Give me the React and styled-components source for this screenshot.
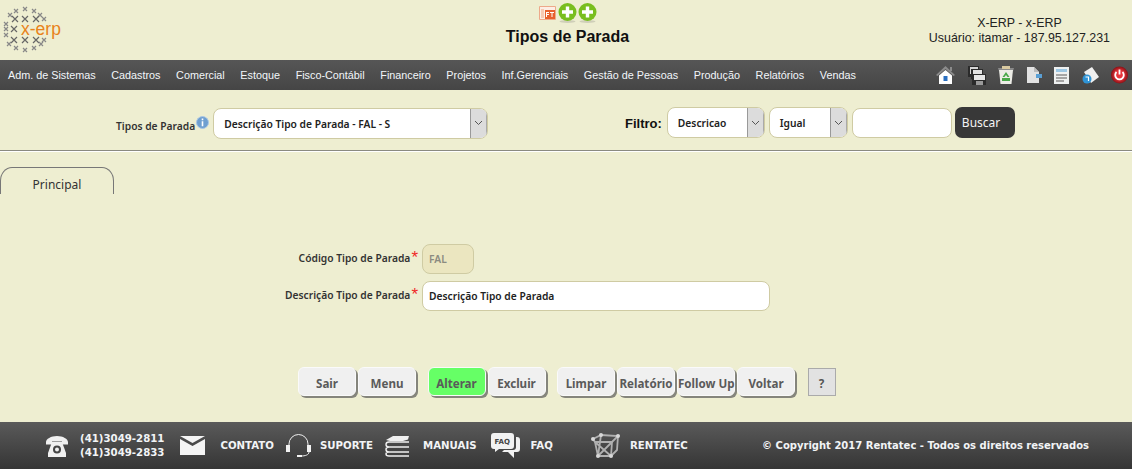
import React from "react";
import styled, { createGlobalStyle } from "styled-components";

const GlobalStyle = createGlobalStyle`
  html, body {
    margin: 0;
    padding: 0;
    background: #eeeed1;
    font-family: "Liberation Sans", Arial, sans-serif;
  }
`;

const Page = styled.div`
  width: 1132px;
  height: 469px;
  display: flex;
  flex-direction: column;
  overflow: hidden;
  background: #eeeed1;
`;

const Header = styled.header`
  height: 60px;
  display: grid;
  grid-template-columns: 1fr auto 1fr;
  align-items: start;
`;

const LogoBox = styled.div`
  padding: 5px 0 0 1px;
`;

const Center = styled.div`
  display: flex;
  flex-direction: column;
  align-items: center;
  padding: 3px 0 0 3px;
`;

const ActionIcons = styled.div`
  display: flex;
  align-items: center;
  gap: 1px;
  height: 20px;
`;

const Title = styled.h1`
  margin: 4px 0 0;
  font-size: 16px;
  line-height: 20px;
  font-weight: 700;
  color: #111;
`;

const UserBox = styled.div`
  justify-self: end;
  padding: 16px 22px 0 0;
  text-align: center;
  font-size: 12.4px;
  line-height: 15px;
  color: #222;
`;

const Nav = styled.nav`
  height: 30px;
  display: flex;
  align-items: center;
  justify-content: space-between;
  padding: 0 4px 0 8px;
  background: linear-gradient(#565656, #454545);
`;

const Menu = styled.div`
  display: flex;
  gap: 15.65px;
`;

const MenuItem = styled.a`
  font-size: 10.8px;
  color: #f2f6fa;
  white-space: nowrap;
`;

const Tools = styled.div`
  display: flex;
  align-items: center;
  gap: 12.5px;
`;

const FilterBar = styled.div`
  height: 61px;
  box-sizing: border-box;
  display: flex;
  align-items: flex-start;
  padding: 17px 0 0 116px;
  border-bottom: 1px solid #8a8a80;
  box-shadow: 0 1px 0 #fff;
`;

const RegisterGroup = styled.div`
  display: flex;
  align-items: center;
  width: 509px;
  height: 32px;
`;

const FilterGroup = styled.div`
  display: flex;
  align-items: center;
  height: 31px;
  gap: 4px;
`;

const FieldLabel = styled.span`
  font-family: "Noto Sans", sans-serif;
  font-size: 10.25px;
  font-weight: 600;
  color: #333;
  white-space: nowrap;
`;

const RegisterLabel = styled(FieldLabel)`
  margin-top: 5px;
`;

const FilterLabel = styled.span`
  font-size: 13px;
  font-weight: 700;
  color: #111;
  margin: 1px 1px 0 0;
`;

const InfoDot = styled.span`
  display: inline-flex;
  margin: -2px 4px 0 1px;
`;

const SelectBox = styled.div`
  box-sizing: border-box;
  width: ${(p) => p.$width}px;
  height: 31px;
  display: flex;
  align-items: stretch;
  background: #fff;
  border: 1px solid #cfcba3;
  border-radius: 8px;
  overflow: hidden;
`;

const SelectValue = styled.span`
  flex: 1;
  align-self: center;
  padding: 1px 0 0 10px;
  font-family: "Noto Sans", sans-serif;
  font-size: 10.25px;
  font-weight: 600;
  color: #222;
  white-space: nowrap;
`;

const SelectArrow = styled.span`
  width: 15px;
  display: flex;
  align-items: center;
  justify-content: center;
  background: #dcdcdc;
  border-left: 1px solid #999;
  border-right: 1px solid #aaa;
`;

const TextBox = styled.div`
  box-sizing: border-box;
  width: ${(p) => p.$width}px;
  height: ${(p) => p.$height || 30}px;
  display: flex;
  align-items: center;
  padding-left: 6px;
  font-family: "Noto Sans", sans-serif;
  font-size: 10.25px;
  font-weight: 600;
  color: ${(p) => (p.$disabled ? "#8b8b80" : "#222")};
  background: ${(p) => (p.$disabled ? "#ebe6c0" : "#fff")};
  border: 1px solid #cfcba3;
  border-radius: 8px;
`;

const SearchButton = styled.button`
  width: 60px;
  height: 31px;
  margin-left: -1px;
  padding: 0 0 0 7px;
  text-align: left;
  font-family: "Noto Sans", sans-serif;
  font-size: 12px;
  color: #f4f4f4;
  background: #383838;
  border: none;
  border-radius: 7px;
`;

const TabRow = styled.div`
  height: 43px;
  display: flex;
  align-items: flex-end;
`;

const Tab = styled.div`
  box-sizing: border-box;
  width: 114px;
  height: 27px;
  padding-top: 8px;
  text-align: center;
  font-family: "Noto Sans", sans-serif;
  font-size: 12px;
  color: #333;
  border: 1px solid #777;
  border-bottom: none;
  border-radius: 12px 12px 0 0 / 14px 14px 0 0;
`;

const Form = styled.div`
  padding-top: 50px;
  display: flex;
  flex-direction: column;
  gap: 7px;
`;

const FormRow = styled.div`
  display: grid;
  grid-template-columns: 422px auto;
  align-items: center;
`;

const RowLabel = styled.div`
  display: flex;
  justify-content: flex-end;
  align-items: center;
  padding: 0 4px 2px 0;
`;

const Required = styled.span`
  color: #f02828;
  font-size: 17px;
  line-height: 10px;
  margin: -1px 0 0 1px;
  font-family: "Liberation Sans", sans-serif;
`;

const ButtonBar = styled.div`
  display: flex;
  align-items: flex-start;
  gap: 11.5px;
  padding: 56px 0 0 298px;
  height: 50px;
  box-sizing: border-box;
`;

const ButtonGroup = styled.div`
  display: flex;
  gap: 2px;
`;

const ActionButton = styled.button`
  box-sizing: border-box;
  width: 58px;
  height: 29px;
  padding: 3px 0 0;
  font-family: "Noto Sans", sans-serif;
  font-size: 11.6px;
  font-weight: 700;
  white-space: nowrap;
  color: #5a5a5a;
  background: ${(p) => (p.$active ? "#66ff66" : "#f0f0f0")};
  border: 1px solid #fafafa;
  border-radius: 6px;
  box-shadow: 2px 2px 0 #85857c;
`;

const HelpButton = styled.button`
  box-sizing: border-box;
  width: 28px;
  height: 28px;
  margin: 1px 0 0 1px;
  padding: 2px 0 0;
  font-family: "Noto Sans", sans-serif;
  font-size: 11.6px;
  font-weight: 700;
  color: #555;
  background: #e2e2e2;
  border: 1px solid #aaa;
`;

const Footer = styled.footer`
  margin-top: auto;
  height: 47px;
  display: flex;
  align-items: center;
  padding: 0 43px 0 46px;
  background: linear-gradient(#5a5a5a, #353535);
`;

const FooterItem = styled.div`
  display: flex;
  align-items: center;
  gap: ${(p) => p.$gap}px;
  margin-right: ${(p) => p.$after}px;
`;

const FooterText = styled.span`
  font-family: "DejaVu Sans", Verdana, sans-serif;
  font-size: 10.2px;
  font-weight: 700;
  line-height: 14px;
  color: #f2f4f6;
  white-space: nowrap;
`;

const Copyright = styled(FooterText)`
  margin-left: auto;
  font-size: 10px;
`;

const Phones = styled.div`
  display: flex;
  flex-direction: column;
`;

const GlobeCrosses = [
  [9, [24]],
  [11, [15, 33]],
  [15, [9, 39]],
  [19, [14, 24, 35, 43]],
  [24, [5]],
  [29, [5, 13]],
  [35, [5]],
  [40, [13, 24, 35, 43]],
  [44, [8, 40]],
  [48, [15, 33]],
  [50, [24]],
];

function Logo() {
  return (
    <svg width="62" height="50" viewBox="0 5 62 50">
      {GlobeCrosses.map(([y, xs]) =>
        xs.map((x) => {
          const far = Math.hypot(x - 24, y - 29) > 17;
          const r = far ? 2 : 3;
          return (
            <path
              key={`${x}-${y}`}
              d={`M${x - r} ${y - r}L${x + r} ${y + r}M${x + r} ${y - r}L${x - r} ${y + r}`}
              stroke={far ? "#888" : "#666"}
              strokeWidth="1.2"
            />
          );
        })
      )}
      <text x="20" y="35" fontFamily="Liberation Sans" fontSize="17.500" fill="#e8821a">
        x-erp
      </text>
    </svg>
  );
}

function SlideIcon() {
  return (
    <svg width="18" height="17" viewBox="0 0 18 17">
      <path d="M0.500 1.500h16v13h-16z" fill="#fdeee4" stroke="#eda98a" />
      <path d="M2 4h3v9H2z" fill="#f7c9b2" />
      <path d="M6 5h10v9H6z" fill="#e8602c" />
      <path d="M7 7h3v1H8v1h2v1H8v2H7zM11 7h4v1h-1.500v4h-1V8H11z" fill="#fff" />
    </svg>
  );
}

function PlusIcon() {
  return (
    <svg width="19" height="20" viewBox="0 0 19 20">
      <ellipse cx="9.500" cy="18.500" rx="8" ry="1.500" fill="#cfcfb8" />
      <circle cx="9.500" cy="9" r="9" fill="#79be1e" />
      <path d="M7.800 3.500h3.400v3.800H15v3.400h-3.800v3.800H7.800v-3.800H4V7.300h3.800z" fill="#fff" />
    </svg>
  );
}

function Chevron() {
  return (
    <svg width="9" height="6" viewBox="0 0 9 6">
      <path d="M1 1l3.500 3.500L8 1" fill="none" stroke="#555" strokeWidth="1" />
    </svg>
  );
}

function InfoIcon() {
  return (
    <svg width="13" height="13" viewBox="0 0 13 13">
      <circle cx="6.500" cy="6.500" r="6" fill="#6f9fd0" stroke="#a9c6e4" />
      <path d="M5.700 2.600h1.600v1.600H5.700zM5.700 5.200h1.600v5H5.700z" fill="#fff" />
    </svg>
  );
}

const toolIcons = [
  <svg key="home" width="19" height="18" viewBox="0 0 19 18">
    <path d="M0 9L9.500 0 19 9l-1.500 1L9.500 3l-8 7z" fill="#8b8b8b" />
    <path d="M14 1h2v4h-2z" fill="#8b8b8b" />
    <path d="M3 9.500L9.500 4 16 9.500V18H3z" fill="#fff" />
    <path d="M7.500 10h4v5h-4z" fill="#2a6fc0" />
  </svg>,
  <svg key="save" width="18" height="19" viewBox="0 0 18 19">
    <path d="M0 0h11v11H0z" fill="#2b2b2b" />
    <path d="M2 1h8v7H2z" fill="#d5d5d5" />
    <path d="M3 3h12v10H3z" fill="#2b2b2b" />
    <path d="M5 4h9v5H5z" fill="#e2e2e2" />
    <path d="M4 8h14v11H4z" fill="#2b2b2b" />
    <path d="M6 9h11v5H6z" fill="#e6e6e6" />
    <path d="M8 15h7v4H8z" fill="#9a9a9a" />
  </svg>,
  <svg key="trash" width="16" height="18" viewBox="0 0 16 18">
    <path d="M0 2h16l-1 3H1z" fill="#8a8a8a" />
    <path d="M1 4h14l-1.500 14h-11z" fill="#ecece6" />
    <path d="M4 0h8v3H4z" fill="#d8c9a0" />
    <path d="M8 6l3.500 5h-2L8 9l-1.500 2h-2zM4 12h8v3H4z" fill="#48a848" />
  </svg>,
  <svg key="page" width="15" height="16" viewBox="0 0 15 16">
    <path d="M0 0h7l5 5v11H0z" fill="#e2e2e2" />
    <path d="M7 0l5 5H7z" fill="#bbb" />
    <path d="M9 7h6v4H9z" fill="#5a9fd4" />
  </svg>,
  <svg key="doc" width="15" height="17" viewBox="0 0 15 17">
    <path d="M0 0h15v17H0z" fill="#eef0f0" />
    <path d="M2 2h11v3H2z" fill="#9cc7e4" />
    <path d="M2 7h11v2H2zM2 10h11v2H2zM2 13h8v2H2z" fill="#a5a5a5" />
  </svg>,
  <svg key="papers" width="17" height="17" viewBox="0 0 17 17">
    <path d="M2 5l8-5 7 10-8 6z" fill="#f0f0f0" />
    <circle cx="5" cy="12" r="4.500" fill="#2f94d6" />
    <path d="M3.500 10h3v4" fill="none" stroke="#fff" strokeWidth="1.200" />
  </svg>,
  <svg key="power" width="17" height="18" viewBox="0 0 17 18">
    <defs>
      <radialGradient id="powerRed" cx="0.500" cy="0.500" r="0.500">
        <stop offset="0.500" stopColor="#e8353b" />
        <stop offset="1" stopColor="#8a1015" />
      </radialGradient>
    </defs>
    <circle cx="8.500" cy="9" r="8.500" fill="url(#powerRed)" />
    <path d="M5.500 6a4.300 4.300 0 1 0 6 0" fill="none" stroke="#fff" strokeWidth="1.800" />
    <path d="M8.500 3.500v5" stroke="#fff" strokeWidth="1.800" />
  </svg>,
];

const menuItems = [
  "Adm. de Sistemas",
  "Cadastros",
  "Comercial",
  "Estoque",
  "Fisco-Contábil",
  "Financeiro",
  "Projetos",
  "Inf.Gerenciais",
  "Gestão de Pessoas",
  "Produção",
  "Relatórios",
  "Vendas",
];

const buttonGroups = [
  [{ label: "Sair" }, { label: "Menu" }],
  [{ label: "Alterar", active: true }, { label: "Excluir" }],
  [{ label: "Limpar" }, { label: "Relatório" }, { label: "Follow Up" }, { label: "Voltar" }],
];

export default function App() {
  return (
    <Page>
      <GlobalStyle />
      <Header>
        <LogoBox>
          <Logo />
        </LogoBox>
        <Center>
          <ActionIcons>
            <SlideIcon />
            <PlusIcon />
            <PlusIcon />
          </ActionIcons>
          <Title>Tipos de Parada</Title>
        </Center>
        <UserBox>
          X-ERP - x-ERP
          <br />
          Usuário: itamar - 187.95.127.231
        </UserBox>
      </Header>

      <Nav>
        <Menu>
          {menuItems.map((item) => (
            <MenuItem key={item}>{item}</MenuItem>
          ))}
        </Menu>
        <Tools>{toolIcons}</Tools>
      </Nav>

      <FilterBar>
        <RegisterGroup>
          <RegisterLabel>Tipos de Parada</RegisterLabel>
          <InfoDot>
            <InfoIcon />
          </InfoDot>
          <SelectBox $width={275}>
            <SelectValue>Descrição Tipo de Parada - FAL - S</SelectValue>
            <SelectArrow>
              <Chevron />
            </SelectArrow>
          </SelectBox>
        </RegisterGroup>
        <FilterGroup>
          <FilterLabel>Filtro:</FilterLabel>
          <SelectBox $width={98}>
            <SelectValue>Descricao</SelectValue>
            <SelectArrow>
              <Chevron />
            </SelectArrow>
          </SelectBox>
          <SelectBox $width={79}>
            <SelectValue>Igual</SelectValue>
            <SelectArrow>
              <Chevron />
            </SelectArrow>
          </SelectBox>
          <TextBox $width={100} />
          <SearchButton>Buscar</SearchButton>
        </FilterGroup>
      </FilterBar>

      <TabRow>
        <Tab>Principal</Tab>
      </TabRow>

      <Form>
        <FormRow>
          <RowLabel>
            <FieldLabel>Código Tipo de Parada</FieldLabel>
            <Required>*</Required>
          </RowLabel>
          <TextBox $width={52} $disabled>
            FAL
          </TextBox>
        </FormRow>
        <FormRow>
          <RowLabel>
            <FieldLabel>Descrição Tipo de Parada</FieldLabel>
            <Required>*</Required>
          </RowLabel>
          <TextBox $width={348}>Descrição Tipo de Parada</TextBox>
        </FormRow>
      </Form>

      <ButtonBar>
        {buttonGroups.map((group) => (
          <ButtonGroup key={group[0].label}>
            {group.map((b) => (
              <ActionButton key={b.label} $active={b.active}>
                {b.label}
              </ActionButton>
            ))}
          </ButtonGroup>
        ))}
        <HelpButton>?</HelpButton>
      </ButtonBar>

      <Footer>
        <FooterItem $gap={12} $after={16}>
          <svg width="22" height="22" viewBox="0 0 22 22">
            <path d="M0 7c0-3 5-6 11-6s11 3 11 6v2.500h-6V6.500H6v3H0z" fill="#f0f0f0" />
            <path d="M6 7h10l4 11v4H2v-4z" fill="#f0f0f0" />
            <circle cx="11" cy="14.500" r="4" fill="#444" />
            <circle cx="11" cy="14.500" r="2" fill="#f0f0f0" />
          </svg>
          <Phones>
            <FooterText>(41)3049-2811</FooterText>
            <FooterText>(41)3049-2833</FooterText>
          </Phones>
        </FooterItem>
        <FooterItem $gap={15} $after={11}>
          <svg width="25" height="19" viewBox="0 0 25 19">
            <path d="M0 0h25L12.500 7z" fill="#f4f4f4" />
            <path d="M0 3l12.500 7L25 3v16H0z" fill="#f4f4f4" />
          </svg>
          <FooterText>CONTATO</FooterText>
        </FooterItem>
        <FooterItem $gap={8} $after={11}>
          <svg width="27" height="24" viewBox="0 0 27 24">
            <path d="M4 13V10a9.500 9.500 0 0 1 19 0v3" fill="none" stroke="#eee" strokeWidth="1" />
            <path d="M1 11h4v7H1zM22 11h4v7h-4z" fill="#f2f2f2" />
            <path d="M24 18c0 3-4 4-8 4" fill="none" stroke="#eee" />
            <path d="M12 21h5v2h-5z" fill="#f2f2f2" />
          </svg>
          <FooterText>SUPORTE</FooterText>
        </FooterItem>
        <FooterItem $gap={12} $after={14}>
          <svg width="27" height="22" viewBox="0 0 27 22">
            <path d="M2 5l7-4h16l-1 3.500-5 1.500H6z" fill="#f0f0f0" />
            <path
              d="M25 7H5c-4 0-4 5 0 5h20M25 12H5c-4 0-4 5 0 5h20M25 17H5c-4 0-4 4 0 4h20"
              fill="none"
              stroke="#f0f0f0"
              strokeWidth="1.400"
            />
          </svg>
          <FooterText>MANUAIS</FooterText>
        </FooterItem>
        <FooterItem $gap={11} $after={37}>
          <svg width="29" height="26" viewBox="0 0 29 26">
            <path d="M3 0h17a3 3 0 0 1 3 3v10a3 3 0 0 1-3 3H8l-4 3v-3H3a3 3 0 0 1-3-3V3a3 3 0 0 1 3-3z" fill="#f2f2f2" />
            <path d="M25 4h1a3 3 0 0 1 3 3v9a3 3 0 0 1-3 3h-3v6l-6-6h-6l2-2h9a3 3 0 0 0 3-3z" fill="#f2f2f2" />
            <text x="3.500" y="11" fontFamily="DejaVu Sans" fontSize="7" fontWeight="700" fill="#444">
              FAQ
            </text>
          </svg>
          <FooterText>FAQ</FooterText>
        </FooterItem>
        <FooterItem $gap={10} $after={0}>
          <svg width="30" height="27" viewBox="0 0 30 27" fill="none" stroke="#b0b0b0" strokeWidth="1.800">
            <path d="M3 7l8-4 17 1-6 6H5z" />
            <path d="M5 10l3 14h13l1-14M28 4l-1 14-6 6M11 3l-3 21M5 10l16 14M22 10L8 24" />
            <g fill="#d8d8d8" stroke="none">
              <circle cx="3" cy="7" r="2" />
              <circle cx="11" cy="3" r="2" />
              <circle cx="28" cy="4" r="2" />
              <circle cx="21" cy="24" r="2" />
              <circle cx="8" cy="24" r="2" />
            </g>
          </svg>
          <FooterText>RENTATEC</FooterText>
        </FooterItem>
        <Copyright>© Copyright 2017 Rentatec - Todos os direitos reservados</Copyright>
      </Footer>
    </Page>
  );
}
